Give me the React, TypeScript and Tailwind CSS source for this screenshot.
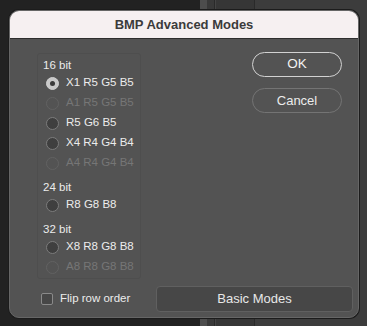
import React from "react"

type Mode = { label: string; disabled?: boolean; checked?: boolean }

const groups: { title: string; modes: Mode[] }[] = [
  {
    title: "16 bit",
    modes: [
      { label: "X1 R5 G5 B5", checked: true },
      { label: "A1 R5 G5 B5", disabled: true },
      { label: "R5 G6 B5" },
      { label: "X4 R4 G4 B4" },
      { label: "A4 R4 G4 B4", disabled: true },
    ],
  },
  { title: "24 bit", modes: [{ label: "R8 G8 B8" }] },
  {
    title: "32 bit",
    modes: [{ label: "X8 R8 G8 B8" }, { label: "A8 R8 G8 B8", disabled: true }],
  },
]

const Radio: React.FC<Mode> = ({ label, disabled, checked }) => {
  let circle = "border-[#7c7c7c] bg-[#3f3f3f]"
  if (checked) circle = "border-[#cfcfcf] bg-[#c9c9c9]"
  if (disabled) circle = "border-[#626262] bg-[#535353]"
  return (
    <div className="h-5 flex items-center pl-2">
      <span className={`w-[13px] h-[13px] rounded-full border flex items-center justify-center ${circle}`}>
        {checked && <span className="w-[5px] h-[5px] rounded-full bg-[#3a3a3a]" />}
      </span>
      <span className={`ml-[7px] text-[11.5px] ${disabled ? "text-[#767676]" : "text-[#ececec]"}`}>{label}</span>
    </div>
  )
}

export default function App() {
  return (
    <div
      className="relative w-[367px] h-[326px] overflow-hidden flex bg-[#222222]"
      style={{ fontFamily: '"Liberation Sans", Arial, sans-serif' }}
    >
      {/* desktop behind the dialog */}
      <div className="w-[200px] h-full bg-[#222222]" />
      <div className="w-[7px] h-full bg-[#4d4d4d]" />
      <div className="w-[8px] h-full bg-[#393939] border-r border-[#2a2a2a]" />
      <div className="w-[40px] h-full bg-[#363636] border-r border-[#2a2a2a] border-l border-l-[#444]" />
      <div className="flex-1 h-full bg-[#3c3c3c]" />

      <div className="absolute left-[9px] top-[10px] w-[350px] h-[308px] rounded-[10px] overflow-hidden border border-[#666] shadow-[0_0_0_1px_#1c1c1c] flex flex-col bg-[#535353]">
        <div className="h-[28px] shrink-0 bg-[#f6f0f1] border-b border-[#2e2e2e] flex items-center justify-center">
          <span className="text-[13px] font-bold text-[#3b3b3b]">BMP Advanced Modes</span>
        </div>

        <div className="flex-1 flex flex-col pl-[27px] pt-[14px]">
          <div className="flex">
            <div className="w-[104px] h-[226px] border border-[#4e4e4e] rounded-[3px] pt-[4px]">
              {groups.map((g, i) => (
                <div key={g.title} className={i > 0 ? "mt-[7px]" : ""}>
                  <div className="h-[15px] pl-[5px] flex items-center text-[11.5px] text-[#ececec]">{g.title}</div>
                  {g.modes.map((m) => (
                    <Radio key={m.label} {...m} />
                  ))}
                </div>
              ))}
            </div>
            <div className="ml-auto mr-[16px] -mt-px flex flex-col gap-[11px]">
              <button className="w-[90px] h-[25px] rounded-full border border-[#d2d2d2] text-[13.5px] text-[#f2f2f2]">
                OK
              </button>
              <button className="w-[90px] h-[25px] rounded-full border border-[#747474] text-[13px] text-[#ececec]">
                Cancel
              </button>
            </div>
          </div>

          <div className="flex items-center mt-[7px] pr-[5px]">
            <span className="ml-[4px] w-[12px] h-[12px] border border-[#8a8a8a] rounded-[2px] bg-[#474747]" />
            <span className="ml-[7px] text-[11.5px] text-[#ececec]">Flip row order</span>
            <button className="ml-auto w-[197px] h-[26px] rounded-[4px] border border-[#606060] bg-[#474747] text-[13px] text-[#e8e8e8]">
              Basic Modes
            </button>
          </div>
        </div>
      </div>
    </div>
  )
}
